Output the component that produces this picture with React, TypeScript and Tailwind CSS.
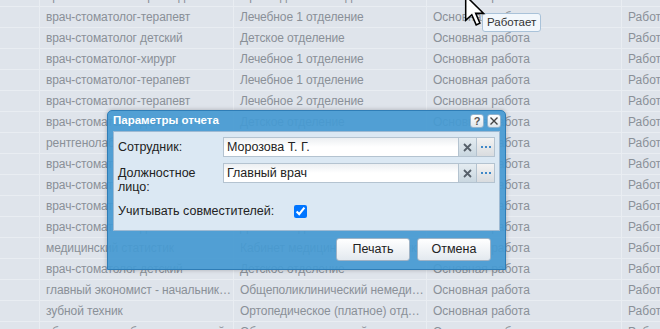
import React from "react";

type Row = [string, string, string, string];

const rows: Row[] = [
  ["врач-стоматолог-ортопед", "Ортопедическое отделение", "Основная работа", "Работает"],
  ["врач-стоматолог-терапевт", "Лечебное 1 отделение", "Основная работа", "Работает"],
  ["врач-стоматолог детский", "Детское отделение", "Основная работа", "Работает"],
  ["врач-стоматолог-хирург", "Лечебное 1 отделение", "Основная работа", "Работает"],
  ["врач-стоматолог-терапевт", "Лечебное 1 отделение", "Основная работа", "Работает"],
  ["врач-стоматолог-терапевт", "Лечебное 2 отделение", "Основная работа", "Работает"],
  ["врач-стоматолог детский", "Детское отделение", "Основная работа", "Работает"],
  ["рентгенолаборант", "Рентгенологический кабинет", "Основная работа", "Работает"],
  ["врач-стоматолог-терапевт", "Лечебное 1 отделение", "Основная работа", "Работает"],
  ["врач-стоматолог-хирург", "Хирургическое отделение", "Основная работа", "Работает"],
  ["врач-стоматолог-терапевт", "Лечебное 2 отделение", "Основная работа", "Работает"],
  ["врач-стоматолог детский", "Детское отделение", "Основная работа", "Работает"],
  ["медицинский статистик", "Кабинет медицинской статистики", "Основная работа", "Работает"],
  ["врач-стоматолог детский", "Детское отделение", "Основная работа", "Работает"],
  ["главный экономист - начальник финансового отдела", "Общеполиклинический немедицинский персонал", "Основная работа", "Работает"],
  ["зубной техник", "Ортопедическое (платное) отделение", "Основная работа", "Работает"],
  ["уборщик служебных помещений", "Общеполиклинический немедицинский персонал", "Основная работа", "Работает"],
];

const font = { fontFamily: "'Liberation Sans', Arial, sans-serif" };

function Grid() {
  return (
    <div className="-mt-[15px] flex flex-col bg-[#dfe4eb]">
      {rows.map((r, i) => (
        <div
          key={i}
          className="grid h-[21px] grid-cols-[40px_194px_193px_195px_1fr] border-t border-[#e9edf2] text-[12px] leading-[20px] text-[#8a9098]"
        >
          <div className="border-r border-[#e9edf2]" />
          <div className="truncate border-r border-[#e9edf2] pl-[6px] pr-[1px] tracking-[-0.1px]">{r[0]}</div>
          <div className="truncate border-r border-[#e9edf2] pl-[6px] pr-[1px] tracking-[-0.1px]">{r[1]}</div>
          <div className="truncate border-r border-[#e9edf2] pl-[6px] pr-[1px]">{r[2]}</div>
          <div className="whitespace-nowrap pl-[6px]">{r[3]}</div>
        </div>
      ))}
    </div>
  );
}

function TriggerButtons() {
  return (
    <div className="flex">
      <div className="flex h-[20px] w-[18px] items-center justify-center border border-l-0 border-[#b4c3d0] bg-gradient-to-b from-[#e4ecf1] to-[#c9d7e0]">
        <svg width="9" height="9" viewBox="0 0 9 9">
          <path d="M1 1L8 8M8 1L1 8" stroke="#56606a" strokeWidth="1.8" />
        </svg>
      </div>
      <div className="flex h-[20px] w-[18px] items-center justify-center border border-l-0 border-[#b4c3d0] bg-gradient-to-b from-[#f3f3f3] to-[#d9dcdf]">
        <div className="flex gap-[2px]">
          <div className="h-[2px] w-[2px] bg-[#3f88c8]" />
          <div className="h-[2px] w-[2px] bg-[#3f88c8]" />
          <div className="h-[2px] w-[2px] bg-[#3f88c8]" />
        </div>
      </div>
    </div>
  );
}

function Field({ value }: { value: string }) {
  return (
    <div className="flex">
      <div className="h-[20px] w-[236px] border border-[#b4c3d0] bg-white bg-gradient-to-b from-[#eceff2] via-white to-white px-[3px] text-[12.5px] leading-[19px] text-[#222]">
        {value}
      </div>
      <TriggerButtons />
    </div>
  );
}

function Dialog() {
  return (
    <div className="absolute left-[107px] top-[110px] flex h-[160px] w-[399px] flex-col rounded-t-[5px] border border-[#2f7db6] bg-[rgba(70,154,210,0.93)] shadow-[0_0_4px_rgba(0,0,0,0.25)]">
      <div className="flex h-[20px] items-center justify-between pl-[5px] pr-[4px]">
        <span className="text-[11.5px] font-bold text-white">Параметры отчета</span>
        <div className="flex gap-[3px]">
          <div className="flex h-[14px] w-[14px] items-center justify-center rounded-[3px] border border-[#8fb3cf] bg-gradient-to-b from-white to-[#dfe6ec] text-[11px] font-bold leading-none text-[#555]">
            ?
          </div>
          <div className="flex h-[14px] w-[14px] items-center justify-center rounded-[3px] border border-[#8fb3cf] bg-gradient-to-b from-white to-[#dfe6ec]">
            <svg width="10" height="10" viewBox="0 0 10 10">
              <path d="M1.5 1.5L8.5 8.5M8.5 1.5L1.5 8.5" stroke="#444" strokeWidth="1.4" />
            </svg>
          </div>
        </div>
      </div>
      <div className="mx-[5px] h-[100px] border border-[#9ebad3] bg-[#dbe8f3] pl-[4px] pr-[4px] pt-[5px] text-[12.5px] text-[#222]">
        <div className="flex items-center">
          <div className="w-[106px]">Сотрудник:</div>
          <Field value="Морозова Т. Г." />
        </div>
        <div className="mt-[6px] flex items-start">
          <div className="w-[106px] pt-[3px] leading-[14px]">
            Должностное
            <br />
            лицо:
          </div>
          <Field value="Главный врач" />
        </div>
        <div className="mt-[8px] flex items-center">
          <div className="w-[176px]">Учитывать совместителей:</div>
          <input
            type="checkbox"
            checked
            readOnly
            className="m-0 h-[13px] w-[13px] accent-[#0075ff]"
          />
        </div>
      </div>
      <div className="flex justify-end gap-[7px] pr-[14px] pt-[7px]">
        <div className="flex h-[23px] w-[74px] items-center justify-center rounded-[3px] border border-[#9fb3c6] bg-gradient-to-b from-white to-[#e3e9ef] text-[12.5px] text-[#222]">
          Печать
        </div>
        <div className="flex h-[23px] w-[74px] items-center justify-center rounded-[3px] border border-[#9fb3c6] bg-gradient-to-b from-white to-[#e3e9ef] text-[12.5px] text-[#222]">
          Отмена
        </div>
      </div>
    </div>
  );
}

export default function App() {
  return (
    <div className="relative h-[329px] w-[660px] overflow-hidden bg-[#dfe4eb]" style={font}>
      <Grid />
      <Dialog />
      <div className="absolute left-[482px] top-[13px] flex h-[19px] items-center rounded-[3px] border border-[#a9c2d9] bg-[#f2f7fc] px-[4px] text-[11.5px] text-[#333]">
        Работает
      </div>
      <svg
        className="absolute left-[464px] top-[-6px]"
        width="22"
        height="34"
        viewBox="0 0 13 20"
      >
        <path
          d="M1 1 L1 15.5 L4.6 12.2 L7.2 18.2 L9.4 17.2 L6.9 11.4 L11.6 11.4 Z"
          fill="white"
          stroke="black"
          strokeWidth="0.9"
          strokeLinejoin="miter"
        />
      </svg>
    </div>
  );
}
